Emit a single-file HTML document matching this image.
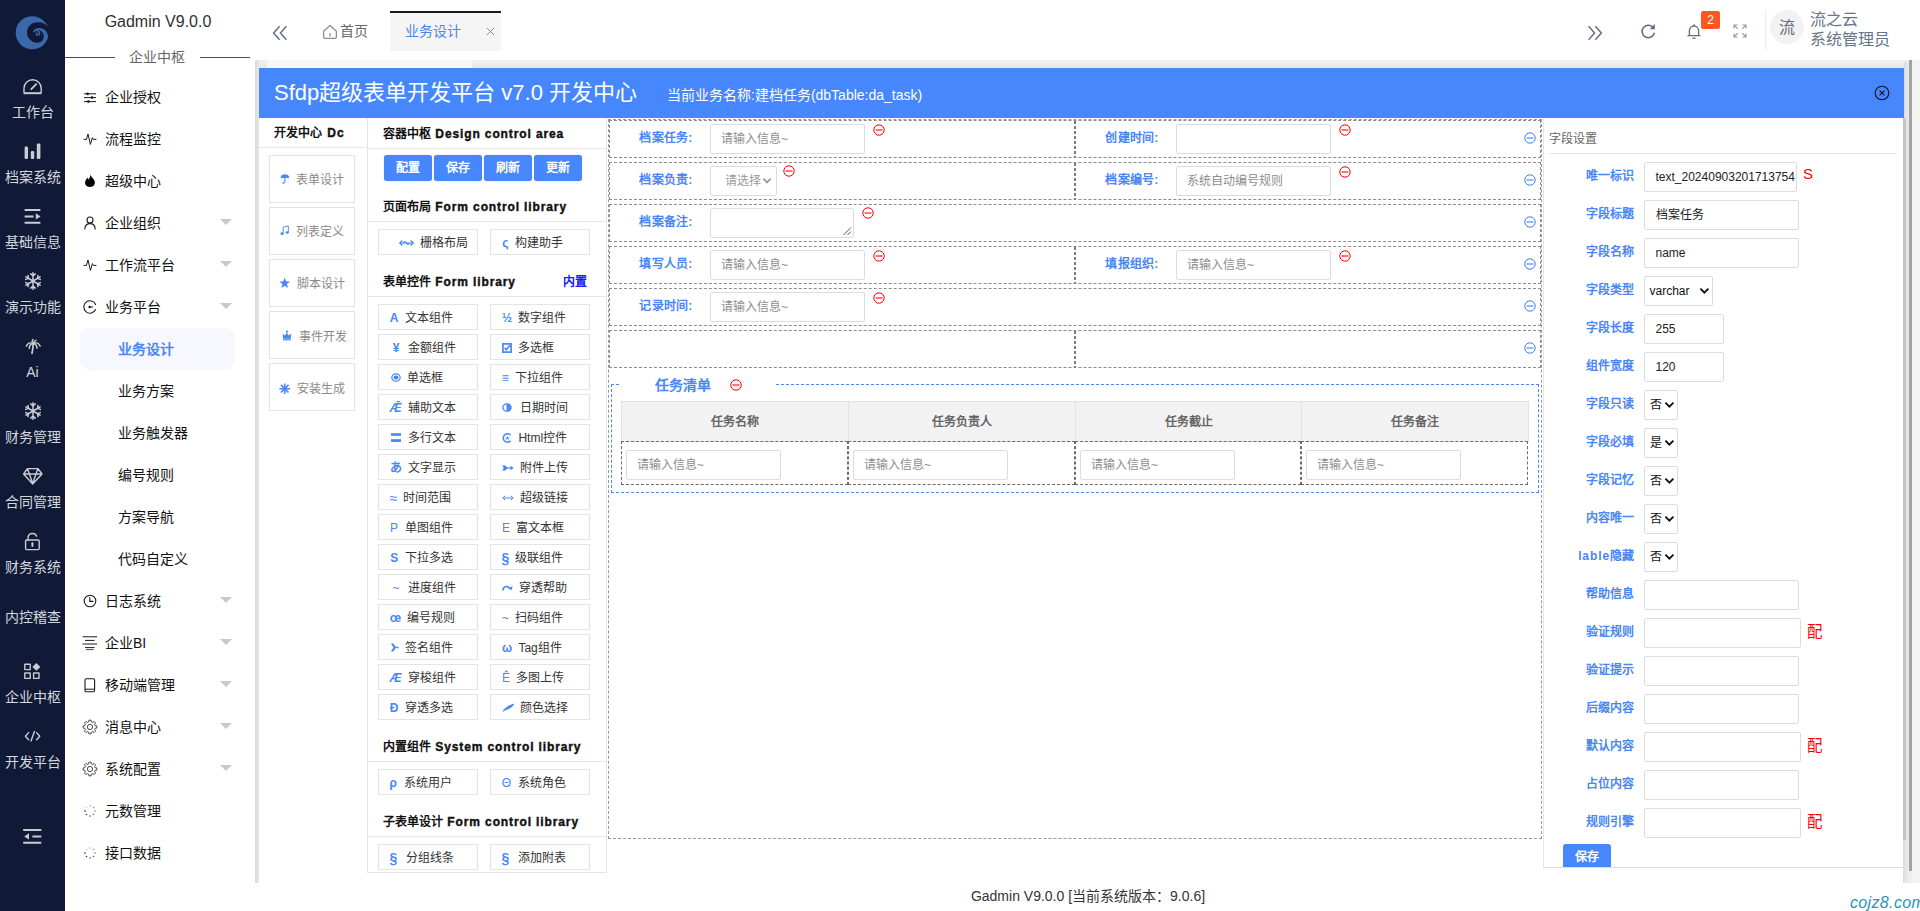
<!DOCTYPE html>
<html lang="zh-CN"><head><meta charset="utf-8"><title>Gadmin V9.0.0</title>
<style>
*{box-sizing:border-box;margin:0;padding:0}
html,body{width:1920px;height:911px;overflow:hidden;background:#fff}
body{position:relative;font-family:"Liberation Sans",sans-serif;font-size:12px;color:#333}
.a{position:absolute;white-space:nowrap}
.c{text-align:center}
.r{text-align:right}
.b{font-weight:bold}
svg{position:absolute;overflow:visible}
/* dark rail */
#rail{left:0;top:0;width:65px;height:911px;background:#101a37}
.rl{left:0;width:65px;height:20px;line-height:20px;font-size:14px;color:#d3d6dd;text-align:center}
/* side menu */
#side{left:65px;top:0;width:190px;height:911px;background:#fff}
.mi{height:22px;line-height:22px;font-size:14px;color:#111}
.tri{width:0;height:0;border-left:6px solid transparent;border-right:6px solid transparent;border-top:6px solid #c9c9c9}
/* header */
#hdr{left:255px;top:0;width:1665px;height:60px;background:#fff}
/* page */
#pg{left:255px;top:60px;width:1665px;height:823px;background:#efefef}
#dlg{left:259px;top:68px;width:1645px;height:815px;background:#fff}
#bar{left:0;top:0;width:1645px;height:50px;background:#4787fd}
.h{font-size:12px;font-weight:bold;color:#111;height:20px;line-height:20px}
.h .en{letter-spacing:.88px;-webkit-text-stroke:.4px #111;margin-left:1px}
.ln{height:1px;background:#e6e6e6}
.vl{width:1px;background:#e6e6e6}
.bx{border:1px solid #e4e4e4;background:#fff}
.btn{background:#4787fd;color:#fff;border-radius:3px;height:26px;line-height:26px;text-align:center;font-size:12px;width:48px;box-shadow:0 0 1px rgba(0,0,0,.35)}
.ic{color:#4a86f5;height:26px;line-height:26px;font-size:12px;text-align:center}
.wt{color:#333;height:26px;line-height:26px;font-size:12px}
.gt{color:#8a8a8a;height:48px;line-height:48px;font-size:12px}
/* form canvas */
.row{border:1px dashed #8c8c8c;height:38px}
.vd{width:2px;background:repeating-linear-gradient(to bottom,#7d7d7d 0,#7d7d7d 3px,transparent 3px,transparent 5px)}
.fl{letter-spacing:.25px;color:#4a86f5;font-weight:bold;font-size:12px;height:20px;line-height:20px;text-align:right;width:70px}
.in{border:1px solid #dcdcdc;border-radius:2px;background:#fff;height:30px;line-height:28px;font-size:12px;color:#8d8d8d;padding-left:10px;overflow:hidden}
.iv{color:#222}
.sel{border:1px solid #dcdcdc;border-radius:2px;background:#fff;height:30px;line-height:28px;font-size:12px;color:#111}
.th{background:#f2f2f2;border:1px solid #e2e2e2;height:41px;line-height:39px;text-align:center;font-weight:bold;color:#666;font-size:12px}
.td{border:1px dashed #6a6a6a}
.pl{color:#4a86f5;font-weight:bold;font-size:12px;height:20px;line-height:20px;text-align:right;width:80px;left:1555px}
.red{color:#f00}
</style></head>
<body>
<div id="rail" class="a">
<svg width="65" height="65" style="left:0;top:0" viewBox="0 0 65 65">
<circle cx="32.2" cy="32.7" r="16.55" fill="#3a68ab"/>
<path d="M45.6 22.6 L48.7 27.3 L45 26 Z" fill="#3a68ab"/>
<path d="M48.8 27.2 C46 23.6 42 22.2 38 22.3 C31 22.4 27 27 27 32.8 C27 38.5 32 43 37.5 42.8 C41 42.7 43.8 40 43.8 36.3 C43.8 32.5 41 30 38 30 C36 30 34.6 30.8 33.6 32.3 L33 31.2 C34.5 29.2 36.6 28.1 39.5 28.1 C44.2 28.1 47.9 31.8 47.9 36.6 L50.5 37 L50.5 27 Z" fill="#101a37"/>
<path d="M33.4 31.6 C35 29.6 38.4 29.4 39.8 31.4 C41 33.2 40 35.6 37.9 35.8 C36.4 35.9 35.3 34.8 35.6 33.5 C35.9 32.4 37.2 32 38 32.7 C37.3 32.6 36.8 33 36.8 33.6 C36.9 34.4 37.9 34.6 38.4 34 C39 33.2 38.6 32 37.6 31.6 C36.2 31 34.4 31.6 33.4 33 Z" fill="#3a68ab"/>
</svg>
<div class="a rl" style="top:102px">工作台</div>
<div class="a rl" style="top:167px">档案系统</div>
<div class="a rl" style="top:232px">基础信息</div>
<div class="a rl" style="top:297px">演示功能</div>
<div class="a rl" style="top:362px">Ai</div>
<div class="a rl" style="top:427px">财务管理</div>
<div class="a rl" style="top:492px">合同管理</div>
<div class="a rl" style="top:557px">财务系统</div>
<div class="a rl" style="top:607px">内控稽查</div>
<div class="a rl" style="top:687px">企业中枢</div>
<div class="a rl" style="top:752px">开发平台</div>
<svg width="21" height="17" style="left:22px;top:78px" viewBox="0 0 21 17" ><path d="M2 14.2 V10.3 A8.6 8.6 0 0 1 19.2 10.3 V14.2" fill="none" stroke="#c9ccd5" stroke-width="1.4" stroke-linecap="round" stroke-linejoin="round"/><path d="M1.6 15.2 H19.6" stroke="#c9ccd5" stroke-width="2"/><path d="M9.3 11.2 L14.2 6.2" stroke="#c9ccd5" stroke-width="1.8" stroke-linecap="round"/></svg>
<svg width="22" height="19" style="left:22px;top:142px" viewBox="0 0 22 19" ><rect x="2.6" y="4.5" width="3.4" height="12.5" rx="1.2" fill="#c9ccd5"/><rect x="8.8" y="9" width="3.4" height="8" rx="1.2" fill="#c9ccd5"/><rect x="14.8" y="1.6" width="3.6" height="15.4" rx="1.2" fill="#c9ccd5"/></svg>
<svg width="22" height="18" style="left:22px;top:207px" viewBox="0 0 22 18" ><path d="M2.6 3 H18.4 M2.6 9.4 H11.6 M2.6 15.8 H18.4" stroke="#c9ccd5" stroke-width="2" fill="none"/><path d="M13.8 6.2 L18.6 9.4 L13.8 12.6 Z" fill="#c9ccd5"/></svg>
<svg width="20" height="20" style="left:22.5px;top:271px" viewBox="0 0 20 20" ><path d="M10.0 10.0 L10.0 18.2 M10.0 15.2 L12.3 17.1 M10.0 15.2 L7.7 17.1 M10.0 10.0 L2.9 14.1 M5.5 12.6 L5.0 15.6 M5.5 12.6 L2.7 11.6 M10.0 10.0 L2.9 5.9 M5.5 7.4 L2.7 8.4 M5.5 7.4 L5.0 4.4 M10.0 10.0 L10.0 1.8 M10.0 4.8 L7.7 2.9 M10.0 4.8 L12.3 2.9 M10.0 10.0 L17.1 5.9 M14.5 7.4 L15.0 4.4 M14.5 7.4 L17.3 8.4 M10.0 10.0 L17.1 14.1 M14.5 12.6 L17.3 11.6 M14.5 12.6 L15.0 15.6 " stroke="#c9ccd5" stroke-width="1.5" fill="none" stroke-linecap="round"/></svg>
<svg width="20" height="20" style="left:22.5px;top:401px" viewBox="0 0 20 20" ><path d="M10.0 10.0 L10.0 18.2 M10.0 15.2 L12.3 17.1 M10.0 15.2 L7.7 17.1 M10.0 10.0 L2.9 14.1 M5.5 12.6 L5.0 15.6 M5.5 12.6 L2.7 11.6 M10.0 10.0 L2.9 5.9 M5.5 7.4 L2.7 8.4 M5.5 7.4 L5.0 4.4 M10.0 10.0 L10.0 1.8 M10.0 4.8 L7.7 2.9 M10.0 4.8 L12.3 2.9 M10.0 10.0 L17.1 5.9 M14.5 7.4 L15.0 4.4 M14.5 7.4 L17.3 8.4 M10.0 10.0 L17.1 14.1 M14.5 12.6 L17.3 11.6 M14.5 12.6 L15.0 15.6 " stroke="#c9ccd5" stroke-width="1.5" fill="none" stroke-linecap="round"/></svg>
<svg width="17.0" height="15.3" style="left:24.5px;top:338.5px" viewBox="0 0 20 18"><path d="M9.6 5.5 C6 3.4 3 5 1.6 8.4 M9.6 5.5 C7 5.6 5.2 7.6 5 11 M9.6 5.5 C13 3.4 16.4 5 17.8 8.4 M9.6 5.5 C12.4 5.6 14 7.6 14.2 11 M9.6 5.5 C8 3 8.4 1.6 9.4 .6 M9.6 5.5 C11 3 11.6 2 13 1.4" stroke="#c9ccd5" stroke-width="1.7" fill="none" stroke-linecap="round"/><path d="M9.8 5.5 C9.4 10 9 13 8.2 17" stroke="#c9ccd5" stroke-width="2" fill="none" stroke-linecap="round"/></svg>
<svg width="22" height="20" style="left:22px;top:466px" viewBox="0 0 22 20" ><path d="M5.4 2.6 H16 L20 8 L10.7 18 L1.6 8 Z M1.6 8 H20 M7.4 8 L10.7 17.4 L14 8 M5.4 2.6 L7.4 8 M16 2.6 L14 8" fill="none" stroke="#c9ccd5" stroke-width="1.4" stroke-linecap="round" stroke-linejoin="round"/></svg>
<svg width="20" height="21" style="left:23px;top:531px" viewBox="0 0 20 21" ><rect x="2.6" y="9" width="13.6" height="9.6" rx="1" fill="none" stroke="#c9ccd5" stroke-width="1.4" stroke-linecap="round" stroke-linejoin="round"/><path d="M5 9 V6.4 A4.5 4.5 0 0 1 13.6 5.2" fill="none" stroke="#c9ccd5" stroke-width="1.4" stroke-linecap="round" stroke-linejoin="round"/><path d="M9.4 12.2 V15" stroke="#c9ccd5" stroke-width="2" stroke-linecap="round"/></svg>
<svg width="20" height="19" style="left:23px;top:662px" viewBox="0 0 20 19" ><rect x="1.8" y="2.2" width="5.4" height="5.4" fill="none" stroke="#c9ccd5" stroke-width="1.4" stroke-linecap="round" stroke-linejoin="round"/><rect x="1.8" y="11" width="5.4" height="5.4" fill="none" stroke="#c9ccd5" stroke-width="1.4" stroke-linecap="round" stroke-linejoin="round"/><rect x="10.6" y="11" width="5.4" height="5.4" fill="none" stroke="#c9ccd5" stroke-width="1.4" stroke-linecap="round" stroke-linejoin="round"/><path d="M13.4 1 L17.4 4.9 L13.4 8.8 L9.4 4.9 Z" fill="#c9ccd5"/></svg>
<svg width="18" height="14" style="left:24px;top:729px" viewBox="0 0 18 14" ><path d="M4.6 3.6 L1.4 7.2 L4.6 10.8 M12.6 3.6 L15.8 7.2 L12.6 10.8 M10.4 2.4 L7 12" fill="none" stroke="#c9ccd5" stroke-width="1.4" stroke-linecap="round" stroke-linejoin="round"/></svg>
<svg width="22" height="18" style="left:22px;top:827px" viewBox="0 0 22 18" ><path d="M1.2 3 H19.3 M10.4 9.4 H19.3 M1.2 15.8 H19.3" stroke="#c9ccd5" stroke-width="2" fill="none"/><path d="M7 6.2 L2.2 9.4 L7 12.6 Z" fill="#c9ccd5"/></svg>
</div>
<div id="side" class="a"></div>
<div class="a c" style="left:63px;top:10px;width:190px;height:24px;line-height:24px;font-size:16px;color:#2f2f2f">Gadmin V9.0.0</div>
<div class="a " style="left:65px;top:57px;width:50px;height:1px;background:#4a4a5a"></div>
<div class="a " style="left:200px;top:57px;width:50px;height:1px;background:#4a4a5a"></div>
<div class="a c" style="left:116px;top:46px;width:81px;height:22px;line-height:22px;font-size:14px;color:#666">企业中枢</div>
<div class="a mi" style="left:105px;top:86px;width:110px;height:22px;line-height:22px;">企业授权</div>
<svg width="14" height="12" style="left:83px;top:92px" viewBox="0 0 14 12" ><path d="M1 1.8 H13 M1 5.6 H13 M1 9.6 H13" stroke="#1a1a1a" stroke-width="1" fill="none"/><circle cx="4.6" cy="1.8" r="1.4" fill="#1a1a1a"/><circle cx="9" cy="5.6" r="1.4" fill="#1a1a1a"/><circle cx="5.4" cy="9.6" r="1.4" fill="#1a1a1a"/></svg>
<div class="a mi" style="left:105px;top:128px;width:110px;height:22px;line-height:22px;">流程监控</div>
<svg width="14" height="14" style="left:83px;top:132px" viewBox="0 0 14 14" ><path d="M.6 7.4 H3.4 L5 2 L7.4 12.4 L9.4 5.6 L10.4 7.4 H13.4" fill="none" stroke="#1a1a1a" stroke-width="1" stroke-linejoin="round"/></svg>
<div class="a mi" style="left:105px;top:170px;width:110px;height:22px;line-height:22px;">超级中心</div>
<svg width="12" height="14" style="left:84px;top:174px" viewBox="0 0 12 14" ><path d="M6.2 .6 C7 3 9.6 4.4 10.6 7 C11.6 10 9.6 13 6 13 C2.4 13 .6 10.4 1.2 7.6 C1.6 5.6 3 4.8 3.6 3.4 C4.2 4.2 4.4 5 4.4 5.8 C5.6 4.6 6.4 2.8 6.2 .6 Z" fill="#000"/></svg>
<div class="a mi" style="left:105px;top:212px;width:110px;height:22px;line-height:22px;">企业组织</div>
<svg width="12" height="14" style="left:84px;top:216px" viewBox="0 0 12 14" ><circle cx="6" cy="4" r="3" fill="none" stroke="#1a1a1a" stroke-width="1.1" stroke-linecap="round" stroke-linejoin="round"/><path d="M.8 13 C1 9.4 3.4 7.6 6 7.6 C8.6 7.6 11 9.4 11.2 13" fill="none" stroke="#1a1a1a" stroke-width="1.1" stroke-linecap="round" stroke-linejoin="round"/></svg>
<div class="a tri" style="left:220px;top:219px;width:12px;height:6px;"></div>
<div class="a mi" style="left:105px;top:254px;width:110px;height:22px;line-height:22px;">工作流平台</div>
<svg width="14" height="14" style="left:83px;top:258px" viewBox="0 0 14 14" ><path d="M.6 7.4 H3.4 L5 2 L7.4 12.4 L9.4 5.6 L10.4 7.4 H13.4" fill="none" stroke="#1a1a1a" stroke-width="1" stroke-linejoin="round"/></svg>
<div class="a tri" style="left:220px;top:261px;width:12px;height:6px;"></div>
<div class="a mi" style="left:105px;top:296px;width:110px;height:22px;line-height:22px;">业务平台</div>
<svg width="14" height="14" style="left:83px;top:300px" viewBox="0 0 14 14" ><path d="M12.6 4.4 A6.2 6.2 0 1 0 12.6 9.6" fill="none" stroke="#1a1a1a" stroke-width="1.1" stroke-linecap="round" stroke-linejoin="round"/><circle cx="6.6" cy="7" r="1.2" fill="#1a1a1a"/><path d="M6.6 7 H10" stroke="#1a1a1a" stroke-width="1"/></svg>
<div class="a tri" style="left:220px;top:303px;width:12px;height:6px;"></div>
<div class="a " style="left:80px;top:328px;width:155px;height:42px;background:#f7f8ff;border-radius:9px"></div>
<div class="a mi b" style="left:118px;top:338px;width:110px;height:22px;line-height:22px;color:#4a86f5">业务设计</div>
<div class="a mi" style="left:118px;top:380px;width:110px;height:22px;line-height:22px;">业务方案</div>
<div class="a mi" style="left:118px;top:422px;width:110px;height:22px;line-height:22px;">业务触发器</div>
<div class="a mi" style="left:118px;top:464px;width:110px;height:22px;line-height:22px;">编号规则</div>
<div class="a mi" style="left:118px;top:506px;width:110px;height:22px;line-height:22px;">方案导航</div>
<div class="a mi" style="left:118px;top:548px;width:110px;height:22px;line-height:22px;">代码自定义</div>
<div class="a mi" style="left:105px;top:590px;width:110px;height:22px;line-height:22px;">日志系统</div>
<svg width="14" height="14" style="left:83px;top:594px" viewBox="0 0 14 14" ><circle cx="7" cy="7" r="5.8" fill="none" stroke="#1a1a1a" stroke-width="1.1" stroke-linecap="round" stroke-linejoin="round"/><path d="M6.8 3.6 V7.4 H10" fill="none" stroke="#1a1a1a" stroke-width="1.1" stroke-linecap="round" stroke-linejoin="round"/></svg>
<div class="a tri" style="left:220px;top:597px;width:12px;height:6px;"></div>
<div class="a mi" style="left:105px;top:632px;width:110px;height:22px;line-height:22px;">企业BI</div>
<svg width="16" height="14" style="left:82px;top:636px" viewBox="0 0 16 14" ><path d="M.6 .8 H15 M3 4.4 H12.6 M.6 8 H15 M3 11.6 H12.6" stroke="#1a1a1a" stroke-width="1" fill="none"/><path d="M4 13.6 H11.6" stroke="#1a1a1a" stroke-width=".8"/></svg>
<div class="a tri" style="left:220px;top:639px;width:12px;height:6px;"></div>
<div class="a mi" style="left:105px;top:674px;width:110px;height:22px;line-height:22px;">移动端管理</div>
<svg width="12" height="15" style="left:84px;top:678px" viewBox="0 0 12 15" ><rect x="1" y=".8" width="9.6" height="13" rx="1.2" fill="none" stroke="#1a1a1a" stroke-width="1.1" stroke-linecap="round" stroke-linejoin="round"/><path d="M1 11.2 H10.6" stroke="#1a1a1a" stroke-width="1"/></svg>
<div class="a tri" style="left:220px;top:681px;width:12px;height:6px;"></div>
<div class="a mi" style="left:105px;top:716px;width:110px;height:22px;line-height:22px;">消息中心</div>
<svg width="14" height="14" style="left:83px;top:720px" viewBox="0 0 14 14" ><path d="M12.12 5.63 L13.82 5.92 L13.82 8.08 L12.12 8.37 L11.59 9.65 L12.58 11.06 L11.06 12.58 L9.65 11.59 L8.37 12.12 L8.08 13.82 L5.92 13.82 L5.63 12.12 L4.35 11.59 L2.94 12.58 L1.42 11.06 L2.41 9.65 L1.88 8.37 L0.18 8.08 L0.18 5.92 L1.88 5.63 L2.41 4.35 L1.42 2.94 L2.94 1.42 L4.35 2.41 L5.63 1.88 L5.92 0.18 L8.08 0.18 L8.37 1.88 L9.65 2.41 L11.06 1.42 L12.58 2.94 L11.59 4.35 Z" fill="none" stroke="#333" stroke-width=".9" stroke-linejoin="round"/><circle cx="7" cy="7" r="2.6" fill="none" stroke="#333" stroke-width=".9"/></svg>
<div class="a tri" style="left:220px;top:723px;width:12px;height:6px;"></div>
<div class="a mi" style="left:105px;top:758px;width:110px;height:22px;line-height:22px;">系统配置</div>
<svg width="14" height="14" style="left:83px;top:762px" viewBox="0 0 14 14" ><path d="M12.12 5.63 L13.82 5.92 L13.82 8.08 L12.12 8.37 L11.59 9.65 L12.58 11.06 L11.06 12.58 L9.65 11.59 L8.37 12.12 L8.08 13.82 L5.92 13.82 L5.63 12.12 L4.35 11.59 L2.94 12.58 L1.42 11.06 L2.41 9.65 L1.88 8.37 L0.18 8.08 L0.18 5.92 L1.88 5.63 L2.41 4.35 L1.42 2.94 L2.94 1.42 L4.35 2.41 L5.63 1.88 L5.92 0.18 L8.08 0.18 L8.37 1.88 L9.65 2.41 L11.06 1.42 L12.58 2.94 L11.59 4.35 Z" fill="none" stroke="#333" stroke-width=".9" stroke-linejoin="round"/><circle cx="7" cy="7" r="2.6" fill="none" stroke="#333" stroke-width=".9"/></svg>
<div class="a tri" style="left:220px;top:765px;width:12px;height:6px;"></div>
<div class="a mi" style="left:105px;top:800px;width:110px;height:22px;line-height:22px;">元数管理</div>
<svg width="14" height="14" style="left:83px;top:804px" viewBox="0 0 14 14" ><circle cx="12.0" cy="7.0" r=".8" fill="#222" opacity="0.57"/><circle cx="10.5" cy="10.5" r=".8" fill="#222" opacity="0.68"/><circle cx="7.0" cy="12.0" r=".8" fill="#222" opacity="0.79"/><circle cx="3.5" cy="10.5" r=".8" fill="#222" opacity="0.89"/><circle cx="2.0" cy="7.0" r=".8" fill="#222" opacity="1.00"/><circle cx="3.5" cy="3.5" r=".8" fill="#222" opacity="0.25"/><circle cx="7.0" cy="2.0" r=".8" fill="#222" opacity="0.36"/><circle cx="10.5" cy="3.5" r=".8" fill="#222" opacity="0.46"/></svg>
<div class="a mi" style="left:105px;top:842px;width:110px;height:22px;line-height:22px;">接口数据</div>
<svg width="14" height="14" style="left:83px;top:846px" viewBox="0 0 14 14" ><circle cx="12.0" cy="7.0" r=".8" fill="#222" opacity="0.57"/><circle cx="10.5" cy="10.5" r=".8" fill="#222" opacity="0.68"/><circle cx="7.0" cy="12.0" r=".8" fill="#222" opacity="0.79"/><circle cx="3.5" cy="10.5" r=".8" fill="#222" opacity="0.89"/><circle cx="2.0" cy="7.0" r=".8" fill="#222" opacity="1.00"/><circle cx="3.5" cy="3.5" r=".8" fill="#222" opacity="0.25"/><circle cx="7.0" cy="2.0" r=".8" fill="#222" opacity="0.36"/><circle cx="10.5" cy="3.5" r=".8" fill="#222" opacity="0.46"/></svg>
<div id="hdr" class="a"></div>
<svg width="16" height="16" style="left:272px;top:25px" viewBox="0 0 16 16" ><path d="M7.6 1.2 L1.6 8 L7.6 14.8 M14.4 1.2 L8.4 8 L14.4 14.8" fill="none" stroke="#5d6b85" stroke-width="1.4" stroke-linejoin="miter"/></svg>
<svg width="16" height="16" style="left:322px;top:24px" viewBox="0 0 16 16" ><path d="M1.6 7.2 L8 1.4 L14.4 7.2 V13 A1.4 1.4 0 0 1 13 14.4 H3 A1.4 1.4 0 0 1 1.6 13 Z" fill="none" stroke="#8e8e8e" stroke-width="1.3" stroke-linejoin="round"/><path d="M8 9.4 V12" stroke="#8e8e8e" stroke-width="1.3" stroke-linecap="round"/></svg>
<div class="a " style="left:340px;top:20px;width:30px;height:22px;line-height:22px;font-size:14px;color:#666">首页</div>
<div class="a " style="left:390px;top:11px;width:111px;height:40px;background:#f5f5f5;border-top:2px solid #17172b"></div>
<div class="a " style="left:405px;top:20px;width:60px;height:22px;line-height:22px;font-size:14px;color:#4a86e8">业务设计</div>
<svg width="9" height="9" style="left:486px;top:27px" viewBox="0 0 9 9" ><path d="M1 1 L8 8 M8 1 L1 8" stroke="#8a8a8a" stroke-width="1" fill="none"/></svg>
<svg width="16" height="16" style="left:1587px;top:25px" viewBox="0 0 16 16" ><path d="M1.6 1.2 L7.6 8 L1.6 14.8 M8.4 1.2 L14.4 8 L8.4 14.8" fill="none" stroke="#5d6b85" stroke-width="1.4"/></svg>
<svg width="16" height="16" style="left:1640px;top:23px" viewBox="0 0 16 16" ><path d="M13.6 5.2 A6.2 6.2 0 1 0 14.4 9.6" fill="none" stroke="#5d6b85" stroke-width="1.5"/><path d="M14.8 1 V6.2 H9.6 Z" fill="#5d6b85"/></svg>
<svg width="16" height="17" style="left:1686px;top:23px" viewBox="0 0 16 17" ><path d="M2 12.6 H14 M3.4 12.4 V7.6 A4.6 4.6 0 0 1 12.6 7.6 V12.4" fill="none" stroke="#5d6b85" stroke-width="1.3" stroke-linecap="round"/><path d="M6.6 14.6 A1.6 1.6 0 0 0 9.4 14.6" fill="none" stroke="#5d6b85" stroke-width="1.2"/><path d="M8 1.2 V3" stroke="#5d6b85" stroke-width="1.3"/></svg>
<div class="a c" style="left:1701px;top:11px;width:19px;height:18px;background:#ff5722;border-radius:2px;color:#fff;font-size:12px;line-height:18px">2</div>
<svg width="14" height="14" style="left:1733px;top:24px" viewBox="0 0 14 14" ><path d="M1 4.6 V1 H4.6 M1 1 L4.8 4.8 M9.4 1 H13 V4.6 M13 1 L9.2 4.8 M1 9.4 V13 H4.6 M1 13 L4.8 9.2 M13 9.4 V13 H9.4 M13 13 L9.2 9.2" fill="none" stroke="#8d9bb3" stroke-width="1.1"/></svg>
<div class="a " style="left:1765px;top:10px;width:1px;height:40px;background:#ececec"></div>
<div class="a c" style="left:1770px;top:10px;width:34px;height:34px;background:#f2f2f2;border-radius:17px;font-size:16px;line-height:36px;color:#5d6b7d">流</div>
<div class="a " style="left:1810px;top:9px;width:100px;height:21px;line-height:21px;font-size:16px;color:#66758a">流之云</div>
<div class="a " style="left:1810px;top:29px;width:100px;height:21px;line-height:21px;font-size:16px;color:#66758a">系统管理员</div>
<div id="pg" class="a"></div>
<div class="a " style="left:1909px;top:60px;width:3px;height:811px;background:#a3a3a3"></div>
<div class="a " style="left:1912px;top:60px;width:8px;height:823px;background:#f3f3f3"></div>
<div class="a " style="left:1904px;top:62px;width:5px;height:56px;background:linear-gradient(to right,#dcdcdc,#ececec)"></div>
<div class="a " style="left:259px;top:62px;width:1645px;height:6px;background:linear-gradient(to bottom,#efefef,#e6e6e6)"></div>
<div class="a " style="left:255px;top:60px;width:4px;height:823px;background:linear-gradient(to right,#dcdcdc,#e6e6e6)"></div>
<div class="a " style="left:267px;top:60px;width:205px;height:8px;background:#f7f7f7"></div>
<div id="dlg" class="a"></div>
<div class="a " style="left:259px;top:68px;width:1645px;height:50px;background:#4787fd"></div>
<div class="a " style="left:274px;top:78px;width:420px;height:30px;line-height:30px;font-size:22px;color:#fff">Sfdp超级表单开发平台 v7.0 开发中心</div>
<div class="a " style="left:667px;top:85px;width:300px;height:20px;line-height:20px;font-size:14px;color:#fff">当前业务名称:建档任务(dbTable:da_task)</div>
<svg width="16" height="16" style="left:1874px;top:85px" viewBox="0 0 16 16" ><circle cx="8" cy="8" r="6.8" fill="none" stroke="#111" stroke-width="1.1"/><path d="M5.6 5.6 L10.4 10.4 M10.4 5.6 L5.6 10.4" stroke="#111" stroke-width="1.1"/></svg>
<div class="a " style="left:1903px;top:118px;width:6px;height:722px;background:linear-gradient(to right,#c2c2c2 0,#c6c6c6 40%,#e2e2e2 55%,#ebebeb 100%)"></div>
<div class="a " style="left:1903px;top:840px;width:6px;height:43px;background:linear-gradient(to right,#dcdcdc,#ededed)"></div>
<div class="a h" style="left:274px;top:123px;width:90px;height:20px;line-height:20px;">开发中心 <span class="en" style="margin-left:2px">Dc</span></div>
<div class="a ln" style="left:259px;top:147px;width:108px;height:1px;"></div>
<div class="a bx" style="left:269px;top:155px;width:86px;height:48px;"></div>
<div class="a " style="left:296px;top:170px;width:60px;height:20px;line-height:20px;color:#8a8a8a;font-size:12px">表单设计</div>
<svg width="9.84" height="11.48" style="left:280px;top:173px" viewBox="0 0 12 14"><path d="M.8 6 A5.2 4.6 0 0 1 11.2 6 Z" fill="#4a86f5"/><path d="M6 5.4 V11 A1.7 1.7 0 0 1 2.8 11.4" fill="none" stroke="#4a86f5" stroke-width="1.3"/></svg>
<div class="a bx" style="left:269px;top:207px;width:86px;height:48px;"></div>
<div class="a " style="left:296px;top:222px;width:60px;height:20px;line-height:20px;color:#8a8a8a;font-size:12px">列表定义</div>
<svg width="9.6" height="11.2" style="left:280px;top:225px" viewBox="0 0 12 14"><path d="M4 10.6 V2.6 L10.4 1.2 V9.2" fill="none" stroke="#4a86f5" stroke-width="1.2"/><ellipse cx="2.6" cy="10.8" rx="2" ry="1.6" fill="#4a86f5"/><ellipse cx="9" cy="9.4" rx="2" ry="1.6" fill="#4a86f5"/></svg>
<div class="a bx" style="left:269px;top:259px;width:86px;height:48px;"></div>
<div class="a " style="left:296.5px;top:274px;width:60px;height:20px;line-height:20px;color:#8a8a8a;font-size:12px">脚本设计</div>
<svg width="11.4" height="12.35" style="left:279.2px;top:277px" viewBox="0 0 12 13"><path d="M6 .8 L7.5 4.6 L11.6 4.9 L8.4 7.5 L9.5 11.5 L6 9.3 L2.5 11.5 L3.6 7.5 L.4 4.9 L4.5 4.6 Z" fill="#4a86f5"/></svg>
<div class="a bx" style="left:269px;top:311px;width:86px;height:48px;"></div>
<div class="a " style="left:299px;top:327px;width:60px;height:20px;line-height:20px;color:#8a8a8a;font-size:12px">事件开发</div>
<svg width="9.84" height="10.66" style="left:281.5px;top:330px" viewBox="0 0 12 13"><path d="M1.2 10.6 L.8 4.6 L3.6 6.6 L6 3.2 L8.4 6.6 L11.2 4.6 L10.8 10.6 Z" fill="#4a86f5"/><circle cx="6" cy="2" r="1.3" fill="#4a86f5"/><rect x="1.2" y="11.2" width="9.6" height="1.4" fill="#4a86f5"/></svg>
<div class="a bx" style="left:269px;top:363px;width:86px;height:48px;"></div>
<div class="a " style="left:297px;top:379px;width:60px;height:20px;line-height:20px;color:#8a8a8a;font-size:12px">安装生成</div>
<svg width="11.4" height="11.4" style="left:279.4px;top:383px" viewBox="0 0 12 12"><path d="M6 .4 V11.6 M.4 6 H11.6 M2 2 L10 10 M10 2 L2 10" stroke="#4a86f5" stroke-width="1.7" fill="none"/></svg>
<div class="a " style="left:367px;top:118px;width:240px;height:755px;border:1px solid #e4e4e4;border-top:none;background:#fff"></div>
<div class="a h" style="left:383px;top:123.5px;width:222px;height:20px;line-height:20px;">容器中枢 <span class="en">Design control area</span></div>
<div class="a ln" style="left:368px;top:148px;width:238px;height:1px;"></div>
<div class="a btn b" style="left:384px;top:155px;width:48px;height:26px;">配置</div>
<div class="a btn b" style="left:434px;top:155px;width:48px;height:26px;">保存</div>
<div class="a btn b" style="left:484px;top:155px;width:48px;height:26px;">刷新</div>
<div class="a btn b" style="left:534px;top:155px;width:48px;height:26px;">更新</div>
<div class="a h" style="left:383px;top:196.5px;width:222px;height:20px;line-height:20px;">页面布局 <span class="en">Form control library</span></div>
<div class="a ln" style="left:368px;top:221px;width:238px;height:1px;"></div>
<div class="a h" style="left:383px;top:271.5px;width:222px;height:20px;line-height:20px;">表单控件 <span class="en">Form library</span></div>
<div class="a b" style="left:562.5px;top:271.5px;width:30px;height:20px;line-height:20px;color:#1a1aff;font-size:12px">内置</div>
<div class="a ln" style="left:368px;top:296px;width:238px;height:1px;"></div>
<div class="a h" style="left:383px;top:736.5px;width:222px;height:20px;line-height:20px;">内置组件 <span class="en">System control library</span></div>
<div class="a ln" style="left:368px;top:761px;width:238px;height:1px;"></div>
<div class="a h" style="left:383px;top:811.5px;width:222px;height:20px;line-height:20px;">子表单设计 <span class="en">Form control library</span></div>
<div class="a ln" style="left:368px;top:836px;width:238px;height:1px;"></div>
<div class="a bx" style="left:378px;top:229px;width:100px;height:26px;"></div>
<svg width="15" height="6" style="left:399.2px;top:239.5px" viewBox="0 0 15 6" ><path d="M1 3 H14" stroke="#4a86f5" stroke-width="1"/><path d="M3.4 .6 L.8 3 L3.4 5.4 M11.6 .6 L14.2 3 L11.6 5.4" fill="none" stroke="#4a86f5" stroke-width="1.3"/><path d="M4.4 3 Q5.9 .2 7.4 3 T10.4 3" fill="none" stroke="#4a86f5" stroke-width="1.4"/></svg>
<div class="a wt" style="left:420px;top:230px;width:70px;height:26px;line-height:26px;">栅格布局</div>
<div class="a bx" style="left:490px;top:229px;width:100px;height:26px;"></div>
<div class="a ic" style="left:495.3px;top:230px;width:20px;height:26px;line-height:26px;font-weight:bold">&#962;</div>
<div class="a wt" style="left:514.5px;top:230px;width:70px;height:26px;line-height:26px;">构建助手</div>
<div class="a bx" style="left:378px;top:304px;width:100px;height:26px;"></div>
<div class="a ic" style="left:384.2px;top:305px;width:20px;height:26px;line-height:26px;font-weight:bold;">A</div>
<div class="a wt" style="left:405px;top:305px;width:70px;height:26px;line-height:26px;">文本组件</div>
<div class="a bx" style="left:490px;top:304px;width:100px;height:26px;"></div>
<div class="a ic" style="left:497px;top:305px;width:20px;height:26px;line-height:26px;font-weight:bold;">&#189;</div>
<div class="a wt" style="left:518px;top:305px;width:70px;height:26px;line-height:26px;">数字组件</div>
<div class="a bx" style="left:378px;top:334px;width:100px;height:26px;"></div>
<div class="a ic" style="left:386px;top:335px;width:20px;height:26px;line-height:26px;font-weight:bold;">&#165;</div>
<div class="a wt" style="left:408px;top:335px;width:70px;height:26px;line-height:26px;">金额组件</div>
<div class="a bx" style="left:490px;top:334px;width:100px;height:26px;"></div>
<svg width="10" height="10" style="left:502.0px;top:342.5px" viewBox="0 0 10 10" ><rect x=".9" y=".9" width="8.2" height="8.2" fill="none" stroke="#4a86f5" stroke-width="1.7"/><path d="M2.6 4.8 L4.4 6.8 L7.8 2.2" fill="none" stroke="#4a86f5" stroke-width="1.6"/></svg>
<div class="a wt" style="left:518px;top:335px;width:70px;height:26px;line-height:26px;">多选框</div>
<div class="a bx" style="left:378px;top:364px;width:100px;height:26px;"></div>
<svg width="10" height="9" style="left:390.5px;top:373.0px" viewBox="0 0 10 9" ><ellipse cx="5" cy="4.5" rx="4.2" ry="3.7" fill="none" stroke="#4a86f5" stroke-width="1.2"/><ellipse cx="5" cy="4.5" rx="2.5" ry="2.1" fill="#4a86f5"/></svg>
<div class="a wt" style="left:407px;top:365px;width:70px;height:26px;line-height:26px;">单选框</div>
<div class="a bx" style="left:490px;top:364px;width:100px;height:26px;"></div>
<div class="a ic" style="left:495.3px;top:365px;width:20px;height:26px;line-height:26px;">&#8801;</div>
<div class="a wt" style="left:515px;top:365px;width:70px;height:26px;line-height:26px;">下拉组件</div>
<div class="a bx" style="left:378px;top:394px;width:100px;height:26px;"></div>
<div class="a ic" style="left:385.5px;top:395px;width:20px;height:26px;line-height:26px;font-weight:bold;font-style:italic;">&#482;</div>
<div class="a wt" style="left:408px;top:395px;width:70px;height:26px;line-height:26px;">辅助文本</div>
<div class="a bx" style="left:490px;top:394px;width:100px;height:26px;"></div>
<svg width="10" height="9" style="left:502.3px;top:403.0px" viewBox="0 0 10 9" ><ellipse cx="5" cy="4.5" rx="4.1" ry="3.7" fill="none" stroke="#4a86f5" stroke-width="1.3"/><path d="M4.6 .8 A4.1 3.7 0 0 1 4.6 8.2 Z" fill="#4a86f5"/></svg>
<div class="a wt" style="left:519.6px;top:395px;width:70px;height:26px;line-height:26px;">日期时间</div>
<div class="a bx" style="left:378px;top:424px;width:100px;height:26px;"></div>
<svg width="10" height="9" style="left:391.0px;top:433.0px" viewBox="0 0 10 9" ><rect x="0" y=".2" width="10" height="2.6" fill="#4a86f5"/><rect x="0" y="6.2" width="10" height="2.7" fill="#4a86f5"/></svg>
<div class="a wt" style="left:408px;top:425px;width:70px;height:26px;line-height:26px;">多行文本</div>
<div class="a bx" style="left:490px;top:424px;width:100px;height:26px;"></div>
<svg width="10" height="10" style="left:502.0px;top:432.5px" viewBox="0 0 10 10" ><path d="M8.6 2.2 A4.2 4.2 0 1 0 8.6 7.8" fill="none" stroke="#4a86f5" stroke-width="1.5"/><path d="M5.4 3 L6.1 4.4 L7.7 4.4 L6.4 5.4 L6.9 7 L5.4 6 L4 7 L4.5 5.4 L3.2 4.4 L4.8 4.4 Z" fill="#4a86f5"/></svg>
<div class="a wt" style="left:518.4px;top:425px;width:70px;height:26px;line-height:26px;">Html控件</div>
<div class="a bx" style="left:378px;top:454px;width:100px;height:26px;"></div>
<div class="a ic" style="left:386px;top:455px;width:20px;height:26px;line-height:26px;font-weight:bold;">&#12354;</div>
<div class="a wt" style="left:408px;top:455px;width:70px;height:26px;line-height:26px;">文字显示</div>
<div class="a bx" style="left:490px;top:454px;width:100px;height:26px;"></div>
<svg width="12" height="6" style="left:501.7px;top:464.5px" viewBox="0 0 12 6" ><path d="M0 .4 H3.4 L5.6 3 L3.4 5.6 H0 L1.8 3 Z" fill="#4a86f5"/><path d="M4 3 H10.4" stroke="#4a86f5" stroke-width="1.2"/><path d="M8.6 .8 L11.6 3 L8.6 5.2 Z" fill="#4a86f5"/></svg>
<div class="a wt" style="left:520px;top:455px;width:70px;height:26px;line-height:26px;">附件上传</div>
<div class="a bx" style="left:378px;top:484px;width:100px;height:26px;"></div>
<div class="a ic" style="left:383.5px;top:485px;width:20px;height:26px;line-height:26px;font-size:14px;">&#8776;</div>
<div class="a wt" style="left:402.5px;top:485px;width:70px;height:26px;line-height:26px;">时间范围</div>
<div class="a bx" style="left:490px;top:484px;width:100px;height:26px;"></div>
<svg width="12" height="6" style="left:501.8px;top:494.5px" viewBox="0 0 12 6" ><path d="M1 3 H11 M3.2 .8 L.8 3 L3.2 5.2 M8.8 .8 L11.2 3 L8.8 5.2" fill="none" stroke="#4a86f5" stroke-width="1"/></svg>
<div class="a wt" style="left:520px;top:485px;width:70px;height:26px;line-height:26px;">超级链接</div>
<div class="a bx" style="left:378px;top:514px;width:100px;height:26px;"></div>
<div class="a ic" style="left:384px;top:515px;width:20px;height:26px;line-height:26px;">P</div>
<div class="a wt" style="left:404.5px;top:515px;width:70px;height:26px;line-height:26px;">单图组件</div>
<div class="a bx" style="left:490px;top:514px;width:100px;height:26px;"></div>
<div class="a ic" style="left:496px;top:515px;width:20px;height:26px;line-height:26px;">E</div>
<div class="a wt" style="left:516px;top:515px;width:70px;height:26px;line-height:26px;">富文本框</div>
<div class="a bx" style="left:378px;top:544px;width:100px;height:26px;"></div>
<div class="a ic" style="left:384.3px;top:545px;width:20px;height:26px;line-height:26px;font-weight:bold;">S</div>
<div class="a wt" style="left:404.5px;top:545px;width:70px;height:26px;line-height:26px;">下拉多选</div>
<div class="a bx" style="left:490px;top:544px;width:100px;height:26px;"></div>
<div class="a ic" style="left:495.3px;top:545px;width:20px;height:26px;line-height:26px;font-weight:bold;font-size:14px;">&#167;</div>
<div class="a wt" style="left:515px;top:545px;width:70px;height:26px;line-height:26px;">级联组件</div>
<div class="a bx" style="left:378px;top:574px;width:100px;height:26px;"></div>
<div class="a ic" style="left:386px;top:575px;width:20px;height:26px;line-height:26px;">~</div>
<div class="a wt" style="left:408px;top:575px;width:70px;height:26px;line-height:26px;">进度组件</div>
<div class="a bx" style="left:490px;top:574px;width:100px;height:26px;"></div>
<svg width="11" height="6" style="left:502.0px;top:584.5px" viewBox="0 0 11 6" ><path d="M.9 5.4 C1 1.6 5.2 .2 8 3.4" fill="none" stroke="#4a86f5" stroke-width="1.5"/><path d="M10.6 1 L9.8 5 L6 3.8 Z" fill="#4a86f5"/></svg>
<div class="a wt" style="left:519px;top:575px;width:70px;height:26px;line-height:26px;">穿透帮助</div>
<div class="a bx" style="left:378px;top:604px;width:100px;height:26px;"></div>
<div class="a ic" style="left:385.5px;top:605px;width:20px;height:26px;line-height:26px;font-weight:bold;">&#339;</div>
<div class="a wt" style="left:407px;top:605px;width:70px;height:26px;line-height:26px;">编号规则</div>
<div class="a bx" style="left:490px;top:604px;width:100px;height:26px;"></div>
<div class="a ic" style="left:495.3px;top:605px;width:20px;height:26px;line-height:26px;">~</div>
<div class="a wt" style="left:515px;top:605px;width:70px;height:26px;line-height:26px;">扫码组件</div>
<div class="a bx" style="left:378px;top:634px;width:100px;height:26px;"></div>
<svg width="8" height="9" style="left:390.5px;top:643.0px" viewBox="0 0 8 9" ><path d="M.8 1 C3 1.6 3.6 3 3.6 4.5 C3.6 6 3 7.4 .8 8 M3.6 4.5 H7.6" fill="none" stroke="#4a86f5" stroke-width="1.3"/><path d="M.6 .8 L3.2 4.5 L.6 8.2" fill="none" stroke="#4a86f5" stroke-width="1.1"/></svg>
<div class="a wt" style="left:404.5px;top:635px;width:70px;height:26px;line-height:26px;">签名组件</div>
<div class="a bx" style="left:490px;top:634px;width:100px;height:26px;"></div>
<div class="a ic" style="left:497px;top:635px;width:20px;height:26px;line-height:26px;font-weight:bold;">&#969;</div>
<div class="a wt" style="left:518.4px;top:635px;width:70px;height:26px;line-height:26px;">Tag组件</div>
<div class="a bx" style="left:378px;top:664px;width:100px;height:26px;"></div>
<div class="a ic" style="left:385.5px;top:665px;width:20px;height:26px;line-height:26px;font-weight:bold;font-style:italic;">&#198;</div>
<div class="a wt" style="left:408px;top:665px;width:70px;height:26px;line-height:26px;">穿梭组件</div>
<div class="a bx" style="left:490px;top:664px;width:100px;height:26px;"></div>
<div class="a ic" style="left:496px;top:665px;width:20px;height:26px;line-height:26px;">&#202;</div>
<div class="a wt" style="left:516px;top:665px;width:70px;height:26px;line-height:26px;">多图上传</div>
<div class="a bx" style="left:378px;top:694px;width:100px;height:26px;"></div>
<div class="a ic" style="left:384px;top:695px;width:20px;height:26px;line-height:26px;font-weight:bold;">&#272;</div>
<div class="a wt" style="left:405px;top:695px;width:70px;height:26px;line-height:26px;">穿透多选</div>
<div class="a bx" style="left:490px;top:694px;width:100px;height:26px;"></div>
<svg width="13" height="9" style="left:501.5px;top:703.0px" viewBox="0 0 13 9" ><path d="M.4 8.6 C3 4 8 1.4 12.6 .4 C11 3.6 7.6 6.4 3 7.4 L.8 8.8 Z" fill="#4a86f5"/></svg>
<div class="a wt" style="left:520px;top:695px;width:70px;height:26px;line-height:26px;">颜色选择</div>
<div class="a bx" style="left:378px;top:769px;width:100px;height:26px;"></div>
<div class="a ic" style="left:383.3px;top:770px;width:20px;height:26px;line-height:26px;font-weight:bold">&#961;</div>
<div class="a wt" style="left:403.7px;top:770px;width:70px;height:26px;line-height:26px;">系统用户</div>
<div class="a bx" style="left:490px;top:769px;width:100px;height:26px;"></div>
<div class="a ic" style="left:496.3px;top:770px;width:20px;height:26px;line-height:26px;">&#920;</div>
<div class="a wt" style="left:517.5px;top:770px;width:70px;height:26px;line-height:26px;">系统角色</div>
<div class="a bx" style="left:378px;top:844px;width:100px;height:26px;"></div>
<div class="a ic" style="left:383.3px;top:845px;width:20px;height:26px;line-height:26px;font-weight:bold;font-size:14px">&#167;</div>
<div class="a wt" style="left:406px;top:845px;width:70px;height:26px;line-height:26px;">分组线条</div>
<div class="a bx" style="left:490px;top:844px;width:100px;height:26px;"></div>
<div class="a ic" style="left:495.3px;top:845px;width:20px;height:26px;line-height:26px;font-weight:bold;font-size:14px">&#167;</div>
<div class="a wt" style="left:517.7px;top:845px;width:70px;height:26px;line-height:26px;">添加附表</div>
<div class="a " style="left:608px;top:119px;width:934px;height:720px;border:1px dashed #9a9a9a"></div>
<div class="a row" style="left:609px;top:120px;width:932px;height:38px;"></div>
<div class="a vd" style="left:1074px;top:121px;width:2px;height:36px;"></div>
<div class="a fl" style="left:622.5px;top:128px;width:70px;height:20px;line-height:20px;">档案任务:</div>
<div class="a in" style="left:710px;top:124px;width:155px;height:30px;">请输入信息~</div>
<svg width="12" height="12" style="left:873px;top:123.6px" viewBox="0 0 12 12" ><circle cx="6" cy="6" r="5.2" fill="none" stroke="#f00" stroke-width="1"/><path d="M2.6 6 H9.4" stroke="#f00" stroke-width="1.1"/></svg>
<div class="a fl" style="left:1088.5px;top:128px;width:70px;height:20px;line-height:20px;">创建时间:</div>
<div class="a in" style="left:1176px;top:124px;width:155px;height:30px;"></div>
<svg width="12" height="12" style="left:1339px;top:123.6px" viewBox="0 0 12 12" ><circle cx="6" cy="6" r="5.2" fill="none" stroke="#f00" stroke-width="1"/><path d="M2.6 6 H9.4" stroke="#f00" stroke-width="1.1"/></svg>
<svg width="12" height="12" style="left:1523.7px;top:131.6px" viewBox="0 0 12 12" ><circle cx="6" cy="6" r="5.2" fill="none" stroke="#3f7fee" stroke-width="1"/><path d="M2.6 6 H9.4" stroke="#3f7fee" stroke-width="1.1"/></svg>
<div class="a row" style="left:609px;top:162px;width:932px;height:38px;"></div>
<div class="a vd" style="left:1074px;top:163px;width:2px;height:36px;"></div>
<div class="a fl" style="left:622.5px;top:170px;width:70px;height:20px;line-height:20px;">档案负责:</div>
<div class="a in" style="left:710px;top:166px;width:67px;height:30px;padding-left:14px;color:#9a9a9a">请选择</div>
<svg width="10" height="8" style="left:762px;top:177px" viewBox="0 0 10 8" ><path d="M1.4 1.6 L5 5.4 L8.6 1.6" fill="none" stroke="#9a9a9a" stroke-width="1.8"/></svg>
<svg width="12" height="12" style="left:783px;top:165.1px" viewBox="0 0 12 12" ><circle cx="6" cy="6" r="5.2" fill="none" stroke="#f00" stroke-width="1"/><path d="M2.6 6 H9.4" stroke="#f00" stroke-width="1.1"/></svg>
<div class="a fl" style="left:1088.5px;top:170px;width:70px;height:20px;line-height:20px;">档案编号:</div>
<div class="a in" style="left:1176px;top:166px;width:155px;height:30px;">系统自动编号规则</div>
<svg width="12" height="12" style="left:1339px;top:165.6px" viewBox="0 0 12 12" ><circle cx="6" cy="6" r="5.2" fill="none" stroke="#f00" stroke-width="1"/><path d="M2.6 6 H9.4" stroke="#f00" stroke-width="1.1"/></svg>
<svg width="12" height="12" style="left:1523.7px;top:173.6px" viewBox="0 0 12 12" ><circle cx="6" cy="6" r="5.2" fill="none" stroke="#3f7fee" stroke-width="1"/><path d="M2.6 6 H9.4" stroke="#3f7fee" stroke-width="1.1"/></svg>
<div class="a row" style="left:609px;top:204px;width:932px;height:38px;"></div>
<div class="a fl" style="left:622.5px;top:212px;width:70px;height:20px;line-height:20px;">档案备注:</div>
<div class="a in" style="left:710px;top:208px;width:144px;height:30px;"></div>
<svg width="10" height="10" style="left:842px;top:226px" viewBox="0 0 10 10" ><path d="M1.5 9 L9 1.5 M5.5 9 L9 5.5" stroke="#555" stroke-width="1"/></svg>
<svg width="12" height="12" style="left:862px;top:207.1px" viewBox="0 0 12 12" ><circle cx="6" cy="6" r="5.2" fill="none" stroke="#f00" stroke-width="1"/><path d="M2.6 6 H9.4" stroke="#f00" stroke-width="1.1"/></svg>
<svg width="12" height="12" style="left:1523.7px;top:215.6px" viewBox="0 0 12 12" ><circle cx="6" cy="6" r="5.2" fill="none" stroke="#3f7fee" stroke-width="1"/><path d="M2.6 6 H9.4" stroke="#3f7fee" stroke-width="1.1"/></svg>
<div class="a row" style="left:609px;top:246px;width:932px;height:38px;"></div>
<div class="a vd" style="left:1074px;top:247px;width:2px;height:36px;"></div>
<div class="a fl" style="left:622.5px;top:254px;width:70px;height:20px;line-height:20px;">填写人员:</div>
<div class="a in" style="left:710px;top:250px;width:155px;height:30px;">请输入信息~</div>
<svg width="12" height="12" style="left:873px;top:249.6px" viewBox="0 0 12 12" ><circle cx="6" cy="6" r="5.2" fill="none" stroke="#f00" stroke-width="1"/><path d="M2.6 6 H9.4" stroke="#f00" stroke-width="1.1"/></svg>
<div class="a fl" style="left:1088.5px;top:254px;width:70px;height:20px;line-height:20px;">填报组织:</div>
<div class="a in" style="left:1176px;top:250px;width:155px;height:30px;">请输入信息~</div>
<svg width="12" height="12" style="left:1339px;top:249.6px" viewBox="0 0 12 12" ><circle cx="6" cy="6" r="5.2" fill="none" stroke="#f00" stroke-width="1"/><path d="M2.6 6 H9.4" stroke="#f00" stroke-width="1.1"/></svg>
<svg width="12" height="12" style="left:1523.7px;top:257.6px" viewBox="0 0 12 12" ><circle cx="6" cy="6" r="5.2" fill="none" stroke="#3f7fee" stroke-width="1"/><path d="M2.6 6 H9.4" stroke="#3f7fee" stroke-width="1.1"/></svg>
<div class="a row" style="left:609px;top:288px;width:932px;height:38px;"></div>
<div class="a fl" style="left:622.5px;top:296px;width:70px;height:20px;line-height:20px;">记录时间:</div>
<div class="a in" style="left:710px;top:292px;width:155px;height:30px;">请输入信息~</div>
<svg width="12" height="12" style="left:873px;top:291.6px" viewBox="0 0 12 12" ><circle cx="6" cy="6" r="5.2" fill="none" stroke="#f00" stroke-width="1"/><path d="M2.6 6 H9.4" stroke="#f00" stroke-width="1.1"/></svg>
<svg width="12" height="12" style="left:1523.7px;top:299.6px" viewBox="0 0 12 12" ><circle cx="6" cy="6" r="5.2" fill="none" stroke="#3f7fee" stroke-width="1"/><path d="M2.6 6 H9.4" stroke="#3f7fee" stroke-width="1.1"/></svg>
<div class="a row" style="left:609px;top:330px;width:932px;height:38px;"></div>
<div class="a vd" style="left:1074px;top:331px;width:2px;height:36px;"></div>
<svg width="12" height="12" style="left:1523.7px;top:341.6px" viewBox="0 0 12 12" ><circle cx="6" cy="6" r="5.2" fill="none" stroke="#3f7fee" stroke-width="1"/><path d="M2.6 6 H9.4" stroke="#3f7fee" stroke-width="1.1"/></svg>
<div class="a " style="left:611px;top:384px;width:928px;height:109px;border:1px dashed #4a86f5"></div>
<div class="a " style="left:619.5px;top:378px;width:156px;height:14px;background:#fff"></div>
<div class="a b" style="left:654.5px;top:375px;width:60px;height:21px;line-height:21px;font-size:14px;color:#4a86f5">任务清单</div>
<svg width="12" height="12" style="left:730px;top:379.1px" viewBox="0 0 12 12" ><circle cx="6" cy="6" r="5.2" fill="none" stroke="#f00" stroke-width="1"/><path d="M2.6 6 H9.4" stroke="#f00" stroke-width="1.1"/></svg>
<div class="a th" style="left:621px;top:401px;width:228px;height:41px;padding-top:1px">任务名称</div>
<div class="a td" style="left:621px;top:441px;width:227px;height:44px;"></div>
<div class="a in" style="left:626px;top:450px;width:155px;height:30px;">请输入信息~</div>
<div class="a th" style="left:848px;top:401px;width:228px;height:41px;padding-top:1px">任务负责人</div>
<div class="a td" style="left:848px;top:441px;width:227px;height:44px;"></div>
<div class="a in" style="left:853px;top:450px;width:155px;height:30px;">请输入信息~</div>
<div class="a th" style="left:1075px;top:401px;width:227px;height:41px;padding-top:1px">任务截止</div>
<div class="a td" style="left:1075px;top:441px;width:226px;height:44px;"></div>
<div class="a in" style="left:1080px;top:450px;width:155px;height:30px;">请输入信息~</div>
<div class="a th" style="left:1301px;top:401px;width:228px;height:41px;padding-top:1px">任务备注</div>
<div class="a td" style="left:1301px;top:441px;width:227px;height:44px;"></div>
<div class="a in" style="left:1306px;top:450px;width:155px;height:30px;">请输入信息~</div>
<div class="a vl" style="left:1543px;top:118px;width:1px;height:749px;"></div>
<div class="a " style="left:1549px;top:129px;width:80px;height:20px;line-height:20px;color:#666;font-size:12px">字段设置</div>
<div class="a ln" style="left:1549px;top:153px;width:348px;height:1px;"></div>
<div class="a " style="left:1543px;top:867px;width:360px;height:1px;background:#dedede"></div>
<div class="a pl" style="left:1554px;top:166px;width:80px;height:20px;line-height:20px;left:1554px">唯一标识</div>
<div class="a in iv" style="left:1644px;top:162px;width:152.5px;height:29.5px;padding-left:10.5px">text_20240903201713754</div>
<div class="a pl" style="left:1554px;top:204px;width:80px;height:20px;line-height:20px;left:1554px">字段标题</div>
<div class="a in iv" style="left:1644px;top:200px;width:154.5px;height:29.5px;padding-left:10.5px">档案任务</div>
<div class="a pl" style="left:1554px;top:242px;width:80px;height:20px;line-height:20px;left:1554px">字段名称</div>
<div class="a in iv" style="left:1644px;top:238px;width:154.5px;height:29.5px;padding-left:10.5px">name</div>
<div class="a pl" style="left:1554px;top:280px;width:80px;height:20px;line-height:20px;left:1554px">字段类型</div>
<div class="a sel" style="left:1644px;top:276px;width:68.5px;height:29.5px;padding-left:4.5px">varchar</div>
<svg width="11" height="8" style="left:1698.5px;top:287px" viewBox="0 0 11 8" ><path d="M1.4 1.6 L5.4 5.6 L9.4 1.6" fill="none" stroke="#111" stroke-width="1.9"/></svg>
<div class="a pl" style="left:1554px;top:318px;width:80px;height:20px;line-height:20px;left:1554px">字段长度</div>
<div class="a in iv" style="left:1644px;top:314px;width:79.5px;height:29.5px;padding-left:10.5px">255</div>
<div class="a pl" style="left:1554px;top:356px;width:80px;height:20px;line-height:20px;left:1554px">组件宽度</div>
<div class="a in iv" style="left:1644px;top:352px;width:79.5px;height:29.5px;padding-left:10.5px">120</div>
<div class="a pl" style="left:1554px;top:394px;width:80px;height:20px;line-height:20px;left:1554px">字段只读</div>
<div class="a sel" style="left:1644px;top:390px;width:33.5px;height:29.5px;padding-left:4.5px">否</div>
<svg width="11" height="8" style="left:1663.5px;top:401px" viewBox="0 0 11 8" ><path d="M1.4 1.6 L5.4 5.6 L9.4 1.6" fill="none" stroke="#111" stroke-width="1.9"/></svg>
<div class="a pl" style="left:1554px;top:432px;width:80px;height:20px;line-height:20px;left:1554px">字段必填</div>
<div class="a sel" style="left:1644px;top:428px;width:33.5px;height:29.5px;padding-left:4.5px">是</div>
<svg width="11" height="8" style="left:1663.5px;top:439px" viewBox="0 0 11 8" ><path d="M1.4 1.6 L5.4 5.6 L9.4 1.6" fill="none" stroke="#111" stroke-width="1.9"/></svg>
<div class="a pl" style="left:1554px;top:470px;width:80px;height:20px;line-height:20px;left:1554px">字段记忆</div>
<div class="a sel" style="left:1644px;top:466px;width:33.5px;height:29.5px;padding-left:4.5px">否</div>
<svg width="11" height="8" style="left:1663.5px;top:477px" viewBox="0 0 11 8" ><path d="M1.4 1.6 L5.4 5.6 L9.4 1.6" fill="none" stroke="#111" stroke-width="1.9"/></svg>
<div class="a pl" style="left:1554px;top:508px;width:80px;height:20px;line-height:20px;left:1554px">内容唯一</div>
<div class="a sel" style="left:1644px;top:504px;width:33.5px;height:29.5px;padding-left:4.5px">否</div>
<svg width="11" height="8" style="left:1663.5px;top:515px" viewBox="0 0 11 8" ><path d="M1.4 1.6 L5.4 5.6 L9.4 1.6" fill="none" stroke="#111" stroke-width="1.9"/></svg>
<div class="a pl" style="left:1554px;top:546px;width:80px;height:20px;line-height:20px;left:1554px"><span style="letter-spacing:.9px">lable</span>隐藏</div>
<div class="a sel" style="left:1644px;top:542px;width:33.5px;height:29.5px;padding-left:4.5px">否</div>
<svg width="11" height="8" style="left:1663.5px;top:553px" viewBox="0 0 11 8" ><path d="M1.4 1.6 L5.4 5.6 L9.4 1.6" fill="none" stroke="#111" stroke-width="1.9"/></svg>
<div class="a pl" style="left:1554px;top:584px;width:80px;height:20px;line-height:20px;left:1554px">帮助信息</div>
<div class="a in iv" style="left:1644px;top:580px;width:154.5px;height:29.5px;padding-left:10.5px"></div>
<div class="a pl" style="left:1554px;top:622px;width:80px;height:20px;line-height:20px;left:1554px">验证规则</div>
<div class="a in iv" style="left:1644px;top:618px;width:156.5px;height:29.5px;padding-left:10.5px"></div>
<div class="a red" style="left:1807px;top:621px;width:20px;height:22px;line-height:22px;font-size:15.5px">配</div>
<div class="a pl" style="left:1554px;top:660px;width:80px;height:20px;line-height:20px;left:1554px">验证提示</div>
<div class="a in iv" style="left:1644px;top:656px;width:154.5px;height:29.5px;padding-left:10.5px"></div>
<div class="a pl" style="left:1554px;top:698px;width:80px;height:20px;line-height:20px;left:1554px">后缀内容</div>
<div class="a in iv" style="left:1644px;top:694px;width:154.5px;height:29.5px;padding-left:10.5px"></div>
<div class="a pl" style="left:1554px;top:736px;width:80px;height:20px;line-height:20px;left:1554px">默认内容</div>
<div class="a in iv" style="left:1644px;top:732px;width:156.5px;height:29.5px;padding-left:10.5px"></div>
<div class="a red" style="left:1807px;top:735px;width:20px;height:22px;line-height:22px;font-size:15.5px">配</div>
<div class="a pl" style="left:1554px;top:774px;width:80px;height:20px;line-height:20px;left:1554px">占位内容</div>
<div class="a in iv" style="left:1644px;top:770px;width:154.5px;height:29.5px;padding-left:10.5px"></div>
<div class="a pl" style="left:1554px;top:812px;width:80px;height:20px;line-height:20px;left:1554px">规则引擎</div>
<div class="a in iv" style="left:1644px;top:808px;width:156.5px;height:29.5px;padding-left:10.5px"></div>
<div class="a red" style="left:1807px;top:811px;width:20px;height:22px;line-height:22px;font-size:15.5px">配</div>
<div class="a red" style="left:1803px;top:162px;width:14px;height:24px;line-height:24px;font-size:15px">S</div>
<div class="a c b" style="left:1563px;top:843.5px;width:48px;height:23.5px;background:#4787fd;color:#fff;border-radius:3px 3px 0 0;line-height:27px;font-size:12px">保存</div>
<div class="a " style="left:255px;top:883px;width:1665px;height:28px;background:#fff"></div>
<div class="a c" style="left:761px;top:885px;width:654px;height:22px;line-height:22px;font-size:14px;color:#333">Gadmin V9.0.0 [当前系统版本：9.0.6]</div>
<div class="a " style="left:1850px;top:891px;width:80px;height:24px;line-height:24px;font-size:16px;font-style:italic;color:#2a93c2;letter-spacing:.35px">cojz8.com</div>
</body></html>
